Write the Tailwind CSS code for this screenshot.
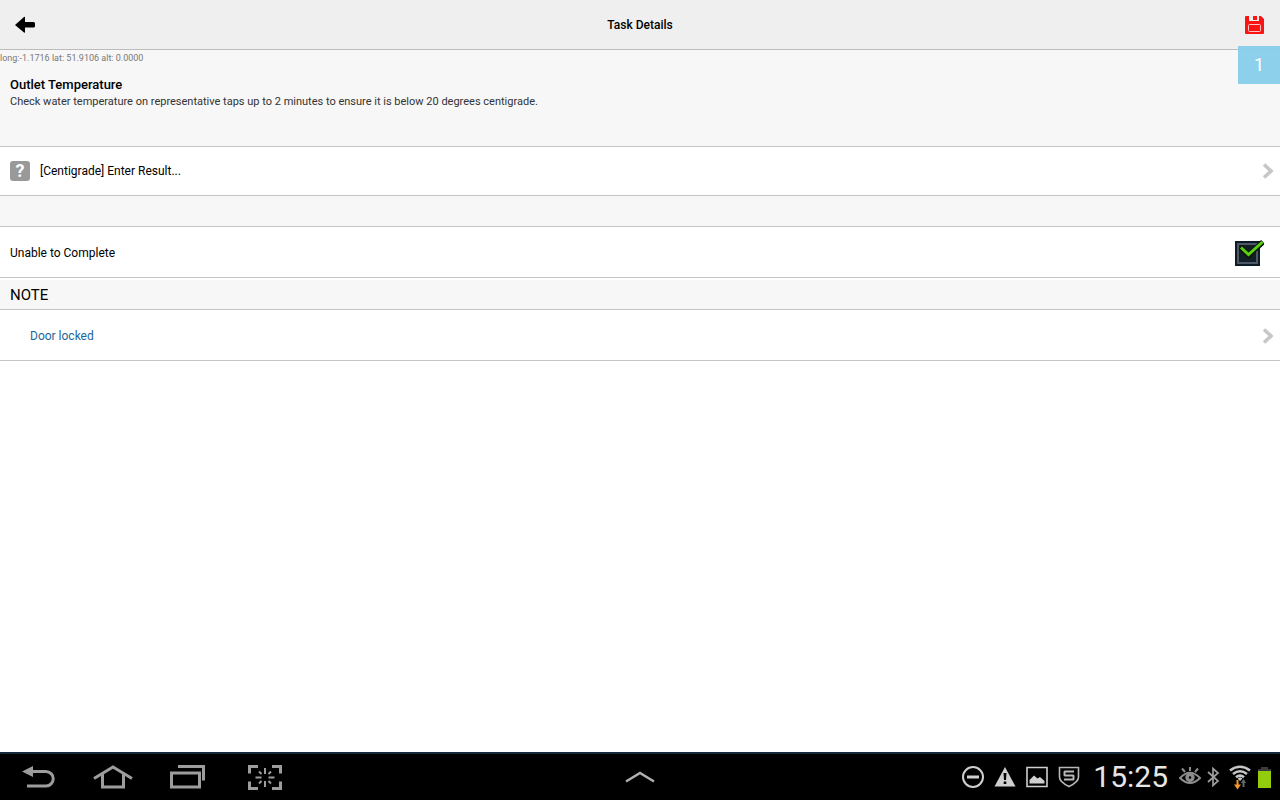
<!DOCTYPE html>
<html lang="en">
<head>
  <meta charset="UTF-8">
  <meta name="viewport" content="width=device-width, initial-scale=1.0">
  <title>Task Details</title>
  <script src="https://cdn.jsdelivr.net/npm/@tailwindcss/browser@4"></script>
  <style>
    body {
      font-family: Roboto, 'Noto Sans', sans-serif;
    }
  </style>
</head>
<body class="flex min-h-screen flex-col bg-white text-xs text-black">

  <!-- Title bar -->
  <header class="relative grid h-[50px] grid-cols-[1fr_auto_1fr] items-center border-b border-[#bcbcbc] bg-[#efefef] px-[14px]">
    <button type="button" aria-label="Back" class="justify-self-start">
      <svg class="h-5 w-[22px]" viewBox="0 0 22 20" fill="#000">
        <path d="M1 10 10 2q1-.6 1 .6V7h8.500q1.500 0 1.500 1.500v2.500q0 1.500-1.500 1.500H11v4.400q0 1.200-1 .6z"/>
      </svg>
    </button>
    <h1 class="font-medium">Task Details</h1>
    <button type="button" aria-label="Save" class="justify-self-end">
      <svg class="h-5 w-[22px]" viewBox="0 0 22 20">
        <path d="M2 1h15l3 3v14q0 1-1 1H2q-1 0-1-1V2q0-1 1-1z" fill="#fb1414"/>
        <path d="M5 1h10v5H5z" fill="#efefef"/>
        <path d="M9 1h4v4H9z" fill="#fb1414"/>
        <path d="M5 1h4v5H5z" fill="#efefef"/>
        <rect x="4.500" y="9.500" width="12" height="7" rx="1" fill="none" stroke="#ffc4c4"/>
      </svg>
    </button>
    <span class="absolute top-[46px] right-0 flex h-[38px] w-[42px] items-center justify-center bg-[#87ceeb]/95 text-lg text-white">1</span>
  </header>

  <main class="flex-1">
    <!-- Task description -->
    <section class="h-24 bg-[#f7f7f7]">
      <p class="pt-[2px] text-[9px] leading-[12px] text-[#777]">long:-1.1716 lat: 51.9106 alt: 0.0000</p>
      <div class="px-[10px] pt-[12px]">
        <h2 class="text-[13px] leading-[18px] font-medium">Outlet Temperature</h2>
        <p class="text-[11px] leading-[15px] text-[#333]">Check water temperature on representative taps up to 2 minutes to ensure it is below 20 degrees centigrade.</p>
      </div>
    </section>

    <a href="#result" class="flex h-[50px] items-center border-y border-[#c4c4c4] bg-white pr-[6px] pl-[10px]">
      <span class="mr-[10px] flex size-5 items-center justify-center rounded-[3px] bg-[#999] text-lg leading-5 font-bold text-white">?</span>
      <span class="flex-1">[Centigrade] Enter Result...</span>
      <svg class="h-4 w-3" viewBox="0 0 12 16" fill="none" stroke="#c7c7c7" stroke-width="3.600">
        <path d="m2 1.500 7 6.500-7 6.500"/>
      </svg>
    </a>

    <div class="h-[30px] bg-[#f7f7f7]"></div>

    <label for="unable" class="flex h-[52px] items-center border-y border-[#c4c4c4] bg-white pt-[2px] pr-4 pl-[10px]">
      <span class="flex-1">Unable to Complete</span>
      <span class="grid">
        <input id="unable" type="checkbox" checked class="peer col-start-1 row-start-1 size-[25px] appearance-none self-center border-2 border-[#0d1b24] bg-[#141e26] ring-2 ring-[#4d5a66] ring-inset">
        <svg class="pointer-events-none invisible col-start-1 row-start-1 h-[26px] w-[29px] peer-checked:visible" viewBox="0 0 29 26" fill="none">
          <path d="m5.500 7 8 8L28 2" stroke="#0b1708" stroke-width="5.500"/>
          <path d="m6 7.500 7.500 7L27.500 2" stroke="#5ad012" stroke-width="3"/>
        </svg>
      </span>
    </label>

    <h3 class="mt-[2px] h-[29px] bg-[#f7f7f7] px-[10px] text-[15px] leading-[30px]">NOTE</h3>

    <a href="#note" class="flex h-[52px] items-center border-y border-[#c4c4c4] bg-white pt-[2px] pr-[6px] pl-[30px] text-[#1d6699]">
      <span class="flex-1">Door locked</span>
      <svg class="h-4 w-3" viewBox="0 0 12 16" fill="none" stroke="#c7c7c7" stroke-width="3.600">
        <path d="m2 1.500 7 6.500-7 6.500"/>
      </svg>
    </a>
  </main>

  <!-- System bar -->
  <footer class="grid h-12 grid-cols-[1fr_auto_1fr] items-center border-t-2 border-[#15293a] bg-black px-2">
    <nav class="flex items-center pl-[14px]">
      <button type="button" aria-label="Back" class="mr-[37px]">
        <svg class="h-6 w-[34px]" viewBox="0 0 34 24" fill="none">
          <path d="M9 6.500h15a7 7 0 0 1 0 14.500H5" stroke="#9d9d9d" stroke-width="3"/>
          <path d="M0 6.500 11 1v11z" fill="#9d9d9d"/>
        </svg>
      </button>
      <button type="button" aria-label="Home" class="mr-[37px]">
        <svg class="h-6 w-10" viewBox="0 0 40 24" fill="none" stroke="#9d9d9d" stroke-width="3">
          <path d="M1 13.500 20 2l19 11.500M9.500 9.500v12.500h21V9.500"/>
        </svg>
      </button>
      <button type="button" aria-label="Recent apps" class="mr-[42px]">
        <svg class="h-6 w-9" viewBox="0 0 36 24" fill="none" stroke="#9d9d9d" stroke-width="3">
          <path d="M1.500 8h28v14h-28z"/>
          <path d="M8 1.500h25.500v14"/>
        </svg>
      </button>
      <button type="button" aria-label="Screenshot">
        <svg class="h-[25px] w-[34px]" viewBox="0 0 34 25" fill="none" stroke="#9d9d9d">
          <path stroke-width="3" d="M1.500 8.500v-7H10M24 1.500h8.500v7M32.500 16.500v7H24M10 23.500H1.500v-7"/>
          <path stroke-width="2" d="M17 3v6M17 16v6M7.500 12.500h6M20.500 12.500h6M11 6.500l2.500 2.500M20.500 16l2.500 2.500M23 6.500l-2.500 2.500M13.500 16 11 18.500"/>
        </svg>
      </button>
    </nav>

    <button type="button" aria-label="Show tray">
      <svg class="h-3 w-[30px]" viewBox="0 0 30 12" fill="none" stroke="#b0b0b0" stroke-width="2.400">
        <path d="M1 10.500 15 2l14 8.500"/>
      </svg>
    </button>

    <div class="flex items-center justify-end">
      <div class="mr-[13px] flex items-center gap-[10px]">
        <svg class="size-[22px]" viewBox="0 0 22 22" fill="none" stroke="#cfcfcf">
          <circle cx="11" cy="11" r="10" stroke-width="2"/>
          <path d="M5 11h12" stroke-width="3"/>
        </svg>
        <svg class="size-[22px]" viewBox="0 0 22 22">
          <path d="M11 1 21.500 20.500H.5z" fill="#cfcfcf"/>
          <path d="M9.500 7h3L12 14h-2zM9.700 15.500h2.600V18H9.700z" fill="#000"/>
        </svg>
        <svg class="size-[22px]" viewBox="0 0 22 22">
          <path d="M1 1.500h20v19H1z" fill="none" stroke="#cfcfcf" stroke-width="1.600"/>
          <path d="M3.500 17.500v-3.500l4.500-4.500 3.500 3 2.500-1.500 4.500 4v2.500z" fill="#cfcfcf"/>
        </svg>
        <svg class="size-[22px]" viewBox="0 0 22 22" fill="none" stroke="#b8b8b8">
          <path d="M1.500 1.500h19v9.500q0 5-9.500 9.500Q1.500 16 1.500 11z" stroke-width="1.600"/>
          <path d="M16 5.500H7L6.500 6v3l.5.500h8l.5.500v3l-.5.500H6" stroke-width="2"/>
        </svg>
      </div>
      <time class="mr-[11px] text-[30px] leading-none text-[#e6e6e6]">15:25</time>
      <svg class="mr-[6px] h-5 w-[22px]" viewBox="0 0 22 20" fill="none" stroke="#8c8c8c">
        <path d="M1 11q10-10.500 20 0-10 10-20 0z" stroke-width="2"/>
        <circle cx="11" cy="10.500" r="3" stroke-width="3.400"/>
        <path d="M11 0v4M3 1.500l3 3.500M19 1.500l-3 3.500" stroke-width="2"/>
      </svg>
      <svg class="mr-[10px] h-5 w-3" viewBox="0 0 12 20" fill="none" stroke="#9d9d9d" stroke-width="1.700">
        <path d="m1 5 10 9-5 4.500v-17L11 6 1 15"/>
      </svg>
      <svg class="mr-[6px] h-[25px] w-[22px]" viewBox="0 0 22 25" fill="none">
        <g stroke="#c6c6c6" stroke-width="2.600">
          <path d="M1 5.500q10-7.500 20 0"/>
          <path d="M4 9q7-5.500 14 0"/>
          <path d="M7 12.300q4-3.500 8 0"/>
        </g>
        <path d="m8.500 13.500 2.500-1.300 2.500 1.300L11 16z" fill="#c6c6c6"/>
        <path d="M8.500 15v6" stroke="#f39a2b" stroke-width="2"/>
        <path d="M5 19.500h7l-3.500 5z" fill="#f39a2b"/>
        <path d="M14.500 22v-6" stroke="#5f6a6a" stroke-width="2"/>
        <path d="M11.800 18 14.500 14l2.700 4z" fill="#5f6a6a"/>
      </svg>
      <svg class="h-[21px] w-[15px]" viewBox="0 0 15 21">
        <path d="M4 0h7v2h3v3H1V2h3z" fill="#3c3c3c"/>
        <path d="M1 4h13v17H1z" fill="#92cc0c"/>
      </svg>
    </div>
  </footer>

</body>
</html>
